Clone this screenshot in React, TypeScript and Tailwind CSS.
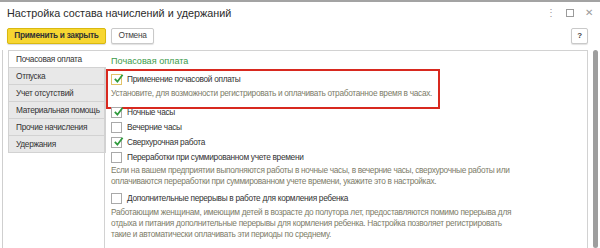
import React from "react";

const tabs = [
  "Почасовая оплата",
  "Отпуска",
  "Учет отсутствий",
  "Материальная помощь",
  "Прочие начисления",
  "Удержания",
];

function Check({ on, focus }: { on?: boolean; focus?: boolean }) {
  return (
    <span
      className={
        "relative inline-block w-[11px] h-[11px] shrink-0 bg-white border " +
        (focus ? "border-[#e2c36a]" : "border-[#a9a9a9]")
      }
    >
      {on && (
        <svg
          viewBox="0 0 12 12"
          className="absolute left-[1px] top-[-2px] w-[11px] h-[11px]"
        >
          <path
            d="M2 6.5 L4.8 9.5 L10.5 1.8"
            fill="none"
            stroke="#2f9a3c"
            strokeWidth="1.9"
          />
        </svg>
      )}
    </span>
  );
}

function Item({
  label,
  on,
  focus,
  className = "",
}: {
  label: string;
  on?: boolean;
  focus?: boolean;
  className?: string;
}) {
  return (
    <div className={"flex items-center gap-[5px] h-[15px] " + className}>
      <Check on={on} focus={focus} />
      <span className="text-[#333333]">{label}</span>
    </div>
  );
}

function Note({ children, className = "" }: { children: React.ReactNode; className?: string }) {
  return (
    <div className={"text-[#7d7c69] leading-[11px] " + className}>{children}</div>
  );
}

export default function App() {
  return (
    <div
      className="w-[600px] h-[248px] bg-white overflow-hidden border-t-2 border-[#a3a3a3] flex flex-col text-[8.3px] tracking-[-0.3px]"
      style={{ fontFamily: '"Liberation Sans", Arial, sans-serif' }}
    >
      <div className="flex items-center justify-between h-[22px] pl-[7px] pr-[7px]">
        <span className="text-[10.8px] tracking-normal text-[#2b2b2b]">
          Настройка состава начислений и удержаний
        </span>
        <div className="flex items-center gap-[11px] text-[#9b9b9b]">
          <span className="text-[10px] leading-none">⋮</span>
          <span className="w-[8px] h-[8px] border border-[#9b9b9b]" />
          <span className="text-[10px] leading-none">✕</span>
        </div>
      </div>

      <div className="flex items-center h-[17px] mt-[3px] pl-[7px] pr-[12px]">
        <button className="h-[16px] w-[99px] rounded-[2px] bg-[#f7d631] border border-[#d9b90f] font-bold text-[#333]  shadow-[0_1px_1px_rgba(0,0,0,0.15)]">
          Применить и закрыть
        </button>
        <button className="ml-[5px] h-[16px] w-[43px] rounded-[2px] bg-white border border-[#c9c9c9] text-[#444] shadow-[0_1px_1px_rgba(0,0,0,0.12)]">
          Отмена
        </button>
        <div className="flex-1" />
        <button className="h-[16px] w-[17px] rounded-[2px] bg-white border border-[#c9c9c9] text-[#444] font-bold text-[8px] shadow-[0_1px_1px_rgba(0,0,0,0.12)]">
          ?
        </button>
      </div>

      <div className="flex flex-1 mt-[6px] ml-[2px] border-l border-[#cfcfcf]">
        <div className="w-[98px] ml-[5px] flex flex-col border-t border-[#d2d2d2]">
          {tabs.map((t, i) => (
            <div
              key={t}
              className={
                "h-[17px] flex items-center pl-[7px] border-b border-l border-[#d2d2d2] text-[#333] " +
                (i === 0 ? "bg-white" : "bg-[#e8e8e8] border-r")
              }
            >
              {t}
            </div>
          ))}
        </div>

        <div className="relative w-[483px] border-t border-r border-[#d2d2d2] pl-[6px] -ml-[1px]">
          <div className="absolute left-[-1px] top-[17px] bottom-0 border-l border-[#d2d2d2]" />
          <div className="absolute left-[1px] top-[18px] w-[334px] h-[40px] border-2 border-[#d8291f]" />

          <div className="text-[9.1px] tracking-normal leading-[14px] mt-[3px] text-[#3c9b4a]">
            Почасовая оплата
          </div>
          <Item className="mt-[4px]" on focus label="Применение почасовой оплаты" />
          <Note className="mt-[1px]">
            Установите, для возможности регистрировать и оплачивать отработанное время в часах.
          </Note>
          <Item className="mt-[6px]" on label="Ночные часы" />
          <Item label="Вечерние часы" />
          <Item on label="Сверхурочная работа" />
          <Item label="Переработки при суммированном учете времени" />
          <Note>
            <div>
              Если на вашем предприятии выполняются работы в ночные часы, в вечерние часы, сверхурочные работы или
            </div>
            <div>
              оплачиваются переработки при суммированном учете времени, укажите это в настройках.
            </div>
          </Note>
          <Item className="mt-[4px]" label="Дополнительные перерывы в работе для кормления ребенка" />
          <Note className="mt-[1px]">
            <div>
              Работающим женщинам, имеющим детей в возрасте до полутора лет, предоставляются помимо перерыва для
            </div>
            <div>
              отдыха и питания дополнительные перерывы для кормления ребенка. Настройка позволяет регистрировать
            </div>
            <div>такие и автоматически оплачивать эти периоды по среднему.</div>
          </Note>
        </div>

        <div className="ml-[5px] w-[5px] rounded-[3px] bg-[#9e9e9e]" />
      </div>
    </div>
  );
}
